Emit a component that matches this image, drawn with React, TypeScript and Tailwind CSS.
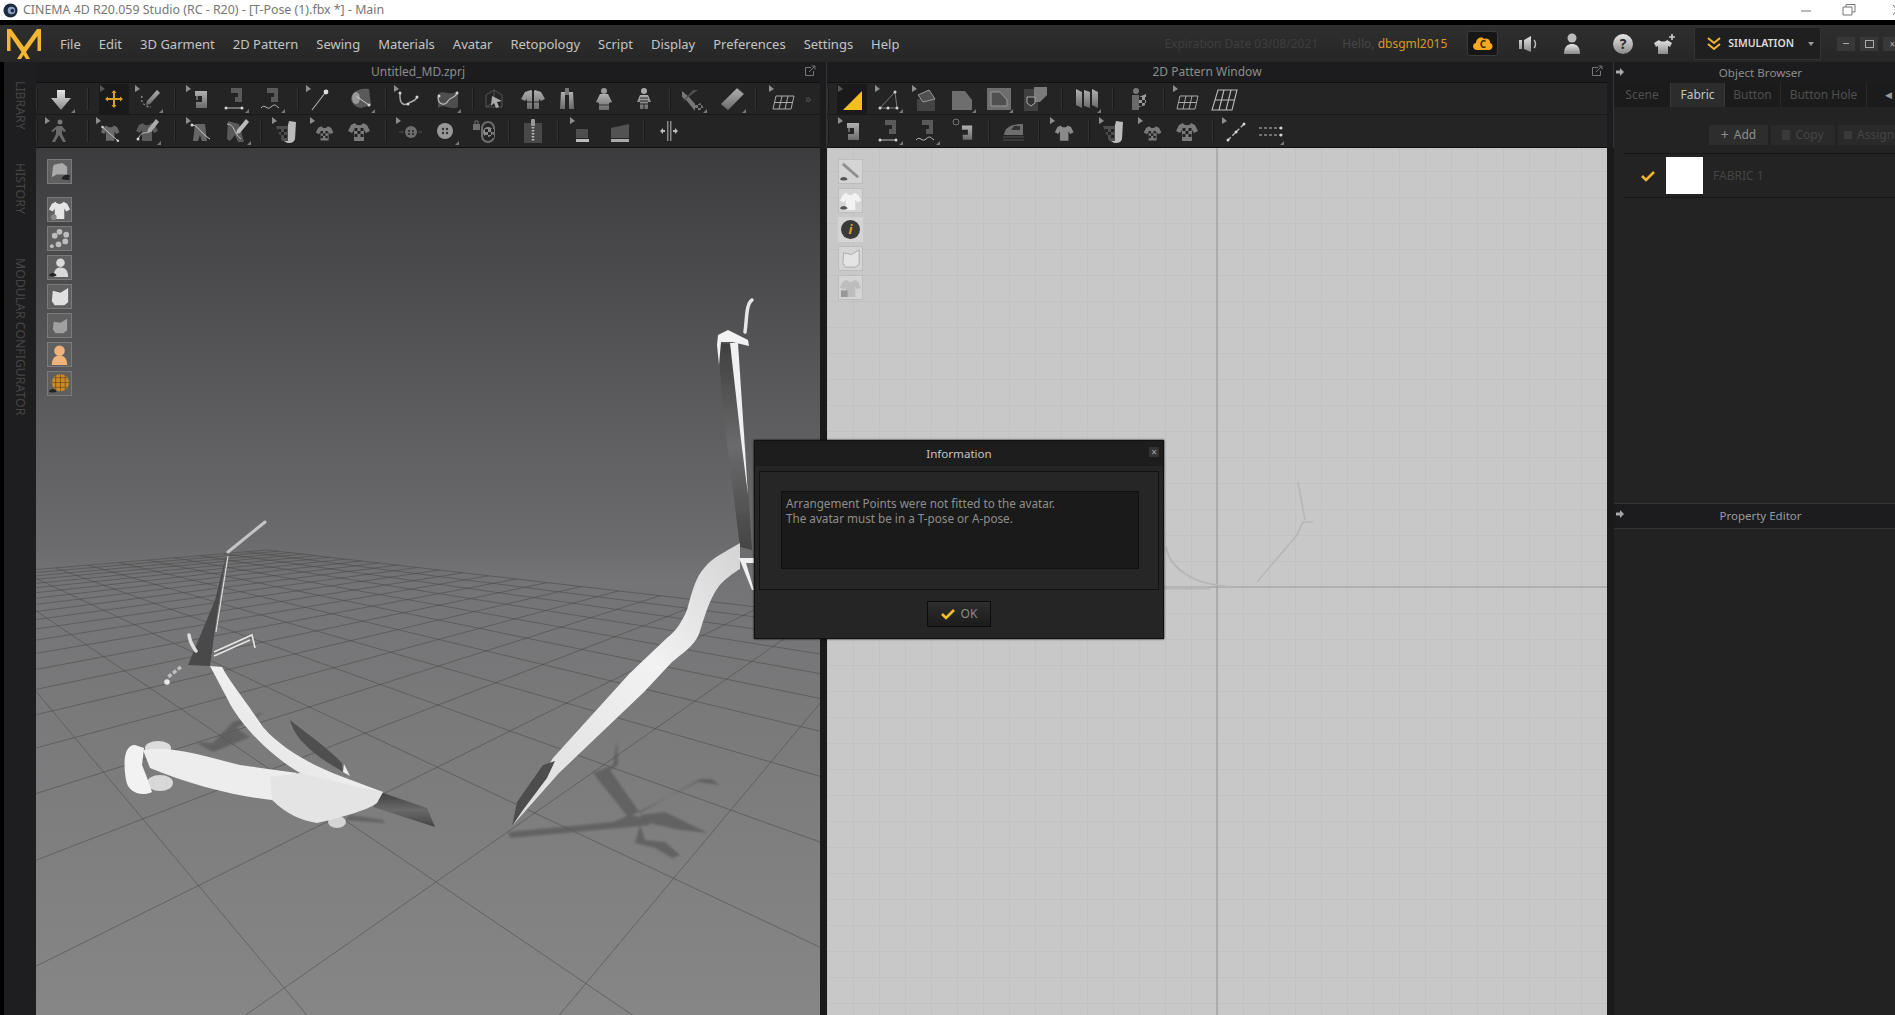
import React from 'react';

// floor grid of the 3D viewport, projected from two vanishing points
const a = 0.028;
const pt = (u: number, v: number) => {
  const s = 1 - u * a - v * a;
  return [(267 + 120 * u * a - 1000 * v * a) / s, (550 - 505 * u * a - 488 * v * a) / s];
};
const floorPath = () => {
  let d = '';
  const N = 40;
  for (let i = 0; i <= N; i++) {
    const lim = 0.97 / a - i;
    if (lim <= 0) continue;
    const e = Math.min(N, lim);
    const p = pt(i, 0), q = pt(i, e), r = pt(0, i), t = pt(e, i);
    d += `M${p[0].toFixed(1)} ${p[1].toFixed(1)}L${q[0].toFixed(1)} ${q[1].toFixed(1)}`;
    d += `M${r[0].toFixed(1)} ${r[1].toFixed(1)}L${t[0].toFixed(1)} ${t[1].toFixed(1)}`;
  }
  return d;
};

const SHIRT = 'M8 4 L4 6 L1 12 L5 14 L7 11 L7 22 L17 22 L17 11 L19 14 L23 12 L20 6 L16 4 C15 7 9 7 8 4z';
const MACHINE = 'M7 4 H19 V21 H8 V15 H14 V9 H7z';

const Checker = ({ x, y }: { x: number; y: number }) => (
  <g fill="#222">
    <rect x={x} y={y} width="3" height="3" />
    <rect x={x + 6} y={y} width="3" height="3" />
    <rect x={x + 3} y={y + 3} width="3" height="3" />
    <rect x={x} y={y + 6} width="3" height="3" />
    <rect x={x + 6} y={y + 6} width="3" height="3" />
  </g>
);

const Dot = ({ x, y }: { x: number; y: number }) => <circle cx={x} cy={y} r="1.5" fill="#d4d4d4" />;

const Glyph = ({ name }: { name: string }) => {
  switch (name) {
    case 'down':
      return <path d="M8 3 H16 V11 H22 L12 23 L2 11 H8z" fill="url(#lg)" />;
    case 'move':
      return <path d="M11 6 H13 V11 H18 V13 H13 V18 H11 V13 H6 V11 H11z M12 3 L14.5 6 H9.5z M12 21 L14.5 18 H9.5z M3 12 L6 9.5 V14.5z M21 12 L18 9.5 V14.5z" fill="#d99f2a" />;
    case 'editpen':
      return <g><path d="M5 9 C3 15 8 20 14 20" fill="none" stroke="#888" strokeDasharray="2 2" strokeWidth="1.5" /><path d="M20 3 L23 6 L13 17 L9 18 L10 14z" fill="url(#lg2)" /></g>;
    case 'sew':
      return <g><path d={MACHINE} fill="url(#lg2)" /><path d="M9 9 V13" stroke="#aaa" /></g>;
    case 'sewseg':
      return <g><path d="M8 1 H19 V15 H12 V10 H15 V6 H8z" fill="#5a5a5a" /><path d="M2 21 H20" stroke="#bbb" /><Dot x={3} y={21} /><Dot x={19} y={21} /></g>;
    case 'sewfree':
      return <g><path d="M8 1 H19 V15 H12 V10 H15 V6 H8z" fill="#5a5a5a" /><path d="M2 21 C6 16 8 24 12 20 S17 19 20 21" stroke="#bbb" fill="none" /></g>;
    case 'pin':
      return <g><path d="M4 23 L17 6" stroke="#aaa" strokeWidth="1.2" /><circle cx="18" cy="5" r="2.4" fill="#ddd" /></g>;
    case 'tack':
      return <g><path d="M2 11 C4 3 13 1 20 2 L22 18 L12 21 C6 20 2 16 2 11z" fill="#5a5a5a" /><ellipse cx="7" cy="11" rx="4" ry="6" fill="#999" /><path d="M7 9 L20 18" stroke="#ccc" /><Dot x={20} y={18} /></g>;
    case 'curve':
      return <g><path d="M4 6 C3 20 10 18 13 16 S20 14 21 10" stroke="#aaa" strokeWidth="1.5" fill="none" /><Dot x={4} y={6} /><Dot x={21} y={10} /><Dot x={12} y={17} /></g>;
    case 'patchcurve':
      return <g><path d="M3 7 C9 2 15 10 23 4 L23 20 C15 24 9 16 3 21z" fill="#4e4e4e" /><path d="M3 10 C3 18 10 19 13 14 S20 12 22 6" stroke="#bbb" strokeWidth="1.2" fill="none" /><Dot x={4} y={9} /><Dot x={22} y={6} /></g>;
    case 'box3d':
      return <g><path d="M4 8 L12 3 V15 L4 20z M12 3 L20 8 V20 H4" fill="none" stroke="#555" /><path d="M10 9 L20 14 L15 15 L17 20 L14 21 L12 16 L9 19z" fill="#aaa" /></g>;
    case 'split':
      return <g><path d="M10 3 L4 5 L0 12 L4 14 L6 12 V22 H11 V4z M14 3 L20 5 L24 12 L20 14 L18 12 V22 H13 V4z" fill="url(#lg2)" /><path d="M0 15 H24" stroke="#242424" /></g>;
    case 'vest':
      return <g><path d="M6 5 H18 L19 22 H14 V8 H10 V22 H5z" fill="url(#lg2)" /><path d="M10 1 H14 V8 H10z" fill="#777" /></g>;
    case 'dress':
      return <g><circle cx="12" cy="4" r="3" fill="#999" /><path d="M8 7 H16 L20 15 L17 16 V23 H7 V16 L4 15z" fill="url(#lg2)" /><path d="M7 18 H17" stroke="#333" /></g>;
    case 'figure':
      return <g><circle cx="12" cy="4" r="3" fill="#aaa" /><path d="M8 8 H16 L19 15 L16 15 V22 H8 V15 H5z" fill="url(#lg2)" /><path d="M8 11 H16 M8 14 H16 M8 17 H16 M12 17 V22" stroke="#242424" /></g>;
    case 'bundle':
      return <g><path d="M1 4 L8 10 L15 18 L20 16 L23 22 L14 24 L6 14 L1 10z" fill="#777" /><path d="M1 15 L12 3 L17 3 L9 9z" fill="#4e4e4e" /><Checker x={14} y={15} /></g>;
    case 'tape':
      return <path d="M17 1 L24 7 L8 23 L1 17z" fill="url(#lg2)" stroke="#555" />;
    case 'grid':
      return <g fill="none" stroke="#aaa" strokeWidth="1"><path d="M5 9 H23 L20 22 H2z M11 9 L8 22 M17 9 L14 22 M3.5 15.5 H21.5" /></g>;
    case 'grid2':
      return <g fill="none" stroke="#bbb" strokeWidth="1.1"><path d="M6 3 H25 L20 23 H0z M12 3 L7 23 M19 3 L14 23 M3 13 H22" /></g>;
    case 'walk':
      return <g><circle cx="13" cy="3" r="2.5" fill="#777" /><path d="M10 7 H15 L19 12 L17 13 L15 11 V15 L19 23 H16 L12 16 L8 23 H5 L9 15 V10 L6 13 L4 12z" fill="#6a6a6a" /></g>;
    case 'shirtpts':
      return <g transform="translate(2 3) scale(.85)"><path d={SHIRT} fill="#6a6a6a" /><Dot x={3} y={6} /><Dot x={21} y={22} /><path d="M3 6 L21 22" stroke="#ccc" /></g>;
    case 'shirtpen':
      return <g><path d={SHIRT} fill="#5a5a5a" /><path d="M3 20 C8 8 14 20 18 6" stroke="#bbb" fill="none" /><Dot x={3} y={20} /><path d="M21 0 L24 3 L16 13 L12 14 L13 10z" fill="#aaa" /></g>;
    case 'body':
      return <g><path d="M7 5 L17 5 L19 22 L14 22 L12 16 L10 22 L5 22z" fill="#666" /><path d="M4 6 C10 6 12 14 22 20" stroke="#ccc" fill="none" /><Dot x={4} y={6} /></g>;
    case 'bodypen':
      return <g><path d="M3 2 L14 5 L19 23 L13 23 L10 16 L5 22 L2 20z" fill="#5a5a5a" /><path d="M2 5 C10 5 8 14 16 20" stroke="#bbb" fill="none" /><path d="M21 0 L24 3 L15 14 L11 15 L12 11z" fill="#bbb" /></g>;
    case 'texture':
      return <g><path d="M15 2 L22 3 L21 20 C20 25 13 25 10 22z" fill="#bbb" /><path d="M2 7 L14 7 L14 22 L8 22z" fill="#4e4e4e" /><Checker x={4} y={10} /></g>;
    case 'shirtcheck':
      return <g transform="translate(3 4) scale(.8)"><path d={SHIRT} fill="#7a7a7a" /><Checker x={7} y={10} /></g>;
    case 'shirtcheck2':
      return <g><path d={SHIRT} fill="#7a7a7a" /><Checker x={7.5} y={9} /></g>;
    case 'btnadd':
      return <g><circle cx="13" cy="13" r="6" fill="#6e6e6e" /><circle cx="11" cy="12" r="1" fill="#222" /><circle cx="15" cy="12" r="1" fill="#222" /><circle cx="11" cy="15" r="1" fill="#222" /><circle cx="15" cy="15" r="1" fill="#222" /><path d="M1 13 H6 M20 13 H24" stroke="#4e4e4e" /></g>;
    case 'btn':
      return <g><circle cx="12" cy="12" r="8" fill="#989898" /><circle cx="10" cy="10" r="1.2" fill="#333" /><circle cx="14" cy="10" r="1.2" fill="#333" /><circle cx="10" cy="14" r="1.2" fill="#333" /><circle cx="14" cy="14" r="1.2" fill="#333" /></g>;
    case 'btnhole':
      return <g><rect x="10" y="3" width="12" height="20" rx="6" fill="none" stroke="#6e6e6e" strokeWidth="2" /><circle cx="16" cy="13" r="5" fill="#8a8a8a" /><Checker x={13} y={10} /><path d="M1 5 H8 V11 H1z" fill="#6e6e6e" /><path d="M3 5 V2 H6 V5" fill="none" stroke="#6e6e6e" /></g>;
    case 'zipper':
      return <g><rect x="3" y="4" width="18" height="20" fill="#484848" /><path d="M12 5 V23" stroke="#bbb" strokeWidth="2.5" strokeDasharray="1.5 1.5" /><rect x="10" y="0" width="4" height="7" rx="1" fill="#999" /></g>;
    case 'elastic':
      return <g><path d="M4 10 H16 V19 H4z" fill="#4e4e4e" /><path d="M4 20 H17 V23 H4z" fill="#bbb" /></g>;
    case 'elastic2':
      return <g><path d="M3 9 L21 5 V19 H3z" fill="#525252" /><path d="M3 20 H21 V23 H3z" fill="#aaa" /></g>;
    case 'measure':
      return <g><path d="M4 12 H8 M16 12 H20" stroke="#bbb" strokeWidth="2" /><path d="M3 12 L6 9 V15z M21 12 L18 9 V15z" fill="#bbb" /><rect x="10" y="2" width="1.5" height="20" fill="#888" /><rect x="13" y="2" width="1.5" height="20" fill="#888" /></g>;
    case 'tri':
      return <path d="M3 23 L22 4 V23z" fill="#f2bf1e" />;
    case 'triedit':
      return <g><path d="M3 21 L18 5 L20 21z" fill="none" stroke="#777" /><Dot x={3} y={21} /><Dot x={18} y={5} /><Dot x={20} y={21} /><Dot x={11} y={21} /></g>;
    case 'house':
      return <g><path d="M3 12 H21 V24 H3z" fill="#444" /><path d="M4 8 L15 3 L21 12 L9 15z" fill="#505050" stroke="#999" /></g>;
    case 'poly':
      return <path d="M2 4 H15 L22 13 V23 H2z" fill="#6e6e6e" />;
    case 'polybox':
      return <g><rect x="0" y="1" width="24" height="22" fill="#6e6e6e" /><path d="M4 5 H13 L20 13 V19 H4z" fill="#505050" stroke="#999" /></g>;
    case 'shield':
      return <g><rect x="0" y="2" width="14" height="22" fill="#404040" /><path d="M10 0 H23 V8 L16 15 H10z" fill="#7a7a7a" /><path d="M3 10 H11 V16 L7 19 L3 16z" fill="#333" stroke="#aaa" /></g>;
    case 'panels':
      return <path d="M1 2 L7 5 V21 L1 18z M9 3 L15 5 V21 L9 19z M17 2 L23 5 V21 L17 18z" fill="url(#lg2)" />;
    case 'persons':
      return <g><circle cx="10" cy="4" r="3" fill="#777" /><path d="M6 8 H13 V23 H6z" fill="#6a6a6a" /><path d="M13 10 L20 7 V18 L13 20z" fill="#999" /><Checker x={13} y={10} /></g>;
    case 'search':
      return <g><circle cx="4" cy="3" r="3" fill="none" stroke="#777" /><path d={MACHINE} fill="url(#lg2)" transform="translate(4 3) scale(.85)" /></g>;
    case 'iron':
      return <g><path d="M3 16 C4 8 10 5 22 5 V16z" fill="#6e6e6e" /><path d="M13 7 H19 V11 H10z" fill="#333" /><path d="M2 18 H23 M2 21 H23" stroke="#505050" /></g>;
    case 'tee':
      return <g transform="translate(2 3) scale(.85)"><path d={SHIRT} fill="#8a8a8a" /></g>;
    case 'line':
      return <g><path d="M4 21 L20 5" stroke="#bbb" strokeWidth="1.3" strokeDasharray="4 2" /><Dot x={4} y={21} /><Dot x={20} y={5} /><Dot x={12} y={13} /></g>;
    case 'dashes':
      return <g><path d="M1 9 H23 M1 16 H23" stroke="#8a8a8a" strokeDasharray="3 2" strokeWidth="1.5" /><Dot x={23} y={9} /><Dot x={23} y={16} /></g>;
    default:
      return null;
  }
};

type Item = [string, string, string?];

const Tool = ({ item }: { item: Item }) => {
  const [name, cls, flags = ''] = item;
  if (name === 'sep') return <div className={`w-[2px] h-[22px] shrink-0 bg-[#343434] border-r border-[#181818] ${cls}`} />;
  const active = flags.includes('x');
  return (
    <div className={`w-[30px] h-[30px] shrink-0 ${active ? 'bg-[#1a1a1a] rounded-[1px]' : ''} ${cls}`}>
      <svg width="30" height="30" viewBox="-3 -3 30 30">
        <Glyph name={name} />
        {flags.includes('a') && <path d="M-2 -2 L3 2 L-2 5z" fill={active ? '#555' : '#8e8e8e'} />}
        {flags.includes('c') && <path d="M26 26 V22 L22 26z" fill="#777" />}
      </svg>
    </div>
  );
};

const row3dA: Item[] = [
  ['sep', 'ml-0'], ['down', 'ml-[8px]', 'c'], ['sep', 'ml-[11px]'], ['move', 'ml-[10px]', 'ax'], ['editpen', 'ml-[5px]', 'ac'],
  ['sep', 'ml-[10px]'], ['sew', 'ml-[9px]', 'a'], ['sewseg', 'ml-[5px]', 'c'], ['sewfree', 'ml-[6px]', 'c'], ['sep', 'ml-[11px]'],
  ['pin', 'ml-[6px]', 'a'], ['tack', 'ml-[11px]', 'c'], ['sep', 'ml-[9px]'], ['curve', 'ml-[6px]', 'a'], ['patchcurve', 'ml-[9px]', 'c'],
  ['sep', 'ml-[10px]'], ['box3d', 'ml-[5px]'], ['split', 'ml-[9px]'], ['vest', 'ml-[4px]'], ['dress', 'ml-[7px]'], ['figure', 'ml-[10px]'],
  ['sep', 'ml-[10px]'], ['bundle', 'ml-[7px]', 'c'], ['tape', 'ml-[9px]', 'c'], ['sep', 'ml-[8px]'], ['grid', 'ml-[11px]', 'a'],
];

const row3dB: Item[] = [
  ['sep', 'ml-0'], ['walk', 'ml-[6px]', 'a'], ['sep', 'ml-[13px]'], ['shirtpts', 'ml-[6px]', 'a'], ['shirtpen', 'ml-[7px]', 'c'],
  ['sep', 'ml-[12px]'], ['body', 'ml-[9px]', 'a'], ['bodypen', 'ml-[7px]', 'c'], ['sep', 'ml-[8px]'], ['texture', 'ml-[9px]', 'a'],
  ['shirtcheck', 'ml-[8px]', 'a'], ['shirtcheck2', 'ml-[5px]'], ['sep', 'ml-[11px]'], ['btnadd', 'ml-[8px]', 'a'], ['btn', 'ml-[5px]', 'c'],
  ['btnhole', 'ml-[9px]'], ['sep', 'ml-[9px]'], ['zipper', 'ml-[8px]'], ['sep', 'ml-[9px]'], ['elastic', 'ml-[10px]', 'a'], ['elastic2', 'ml-[6px]'],
  ['sep', 'ml-[8px]'], ['measure', 'ml-[9px]'],
];

const row2dA: Item[] = [
  ['sep', 'ml-0'], ['tri', 'ml-[8px]', 'ax'], ['triedit', 'ml-[7px]', 'ac'], ['house', 'ml-[7px]', 'a'], ['poly', 'ml-[6px]', 'c'],
  ['polybox', 'ml-[7px]', 'c'], ['shield', 'ml-[7px]'], ['sep', 'ml-[10px]'], ['panels', 'ml-[9px]', 'c'], ['sep', 'ml-[10px]'],
  ['persons', 'ml-[9px]'], ['sep', 'ml-[10px]'], ['grid', 'ml-[7px]', 'a'], ['grid2', 'ml-[7px]'],
];

const row2dB: Item[] = [
  ['sep', 'ml-0'], ['sew', 'ml-[8px]', 'a'], ['sewseg', 'ml-[7px]', 'c'], ['sewfree', 'ml-[7px]', 'c'], ['search', 'ml-[8px]'],
  ['sep', 'ml-[9px]'], ['iron', 'ml-[8px]'], ['sep', 'ml-[10px]'], ['tee', 'ml-[9px]', 'a'], ['sep', 'ml-[9px]'], ['texture', 'ml-[8px]', 'a'],
  ['shirtcheck', 'ml-[9px]', 'a'], ['shirtcheck2', 'ml-[5px]'], ['sep', 'ml-[10px]'], ['line', 'ml-[7px]', 'a'], ['dashes', 'ml-[4px]', 'c'],
];

const Popout = () => (
  <svg width="12" height="12" viewBox="0 0 12 12" fill="none" stroke="#777" className="absolute right-[4px] top-[3px]">
    <path d="M7 2.5 H1.5 V10.5 H9.5 V6" />
    <path d="M5 7 L10.5 1.5 M7.5 1 H11 V4.5" />
  </svg>
);

const PanelArrow = () => (
  <svg width="10" height="10" viewBox="0 0 10 10" className="absolute left-[1px] top-[5px]">
    <path d="M1 3.5 H5 V1 L9 5 L5 9 V6.5 H1z" fill="#a8a8a8" />
  </svg>
);

const ViewIcon = ({ children, light }: { children: React.ReactNode; light?: boolean }) => (
  <div className={`w-[25px] h-[25px] border ${light ? 'bg-[#d4d4d4] border-[#bdbdbd]' : 'bg-[#5f5f60] border-[#7a7a7a]'}`}>
    <svg width="23" height="23" viewBox="0 0 24 24">{children}</svg>
  </div>
);

const Eye = () => <path d="M1 20 C3 17 7 17 9 20 C7 22 3 22 1 20z" fill="#555" />;

const Scene3D = () => (
  <svg width="784" height="867" viewBox="36 148 784 867" className="absolute inset-0">
    <defs>
      <linearGradient id="dk" x1="0" y1="0" x2="0" y2="1">
        <stop offset="0" stopColor="#3f3f3f" />
        <stop offset="0.5" stopColor="#6a6a6a" />
        <stop offset="1" stopColor="#444" />
      </linearGradient>
      <linearGradient id="wh" x1="1" y1="0" x2="0" y2="1">
        <stop offset="0" stopColor="#d4d4d4" />
        <stop offset="0.4" stopColor="#f2f2f2" />
        <stop offset="1" stopColor="#dcdcdc" />
      </linearGradient>
      <filter id="soft"><feGaussianBlur stdDeviation="0.6" /></filter>
      <filter id="softer"><feGaussianBlur stdDeviation="1.2" /></filter>
    </defs>
    <path d={floorPath()} stroke="#484848" strokeOpacity="0.55" strokeWidth="1" fill="none" />

    {/* shadows */}
    <g fill="#5a5a5a" fillOpacity="0.75" filter="url(#softer)">
      <path d="M265 712 L233 722 L213 743 L195 742 L213 752 L250 737 L236 728z" />
      <path d="M350 815 L383 820 L385 823 L345 820z" />
      <path d="M617 741 L613 765 L593 773 L628 817 L698 782 L720 785 L712 779 L700 779 L640 813 L610 770 L618 765z" />
      <path d="M508 832 L613 822 L630 815 L645 818 L650 825 L630 827 L510 838z" />
      <path d="M640 815 L665 812 L708 833 L680 830 L645 822z" />
      <path d="M640 825 L645 840 L665 842 L680 855 L672 858 L655 848 L635 843z" />
    </g>

    {/* left figure */}
    <g filter="url(#soft)">
      <path d="M265 522 L228 552" stroke="#c4c4c4" strokeWidth="3" strokeLinecap="round" />
      <path d="M226 556 L215 600 L188 665 L210 666 L216 622z" fill="#4a4a4a" />
      <path d="M228 556 L216 632" stroke="#dcdcdc" strokeWidth="1.2" fill="none" />
      <path d="M189 635 C190 642 193 647 196 651" stroke="#ddd" strokeWidth="3.5" fill="none" strokeLinecap="round" />
      <path d="M214 652 L252 635 L255 648 M214 656 L250 640" stroke="#e4e4e4" strokeWidth="1.6" fill="none" />
      <path d="M181 667 L168 677" stroke="#bdbdbd" strokeWidth="3.5" strokeDasharray="4 2" />
      <circle cx="167" cy="682" r="2.8" fill="#e8e8e8" />
      <path d="M210 666 L222 667 C230 682 243 697 263 727 C280 747 310 765 343 777 L383 792 L347 793 C320 785 295 772 277 757 C255 740 235 715 228 700z" fill="url(#wh)" />
      <path d="M290 720 C294 735 305 750 343 772 L342 763 C328 748 305 732 290 720z" fill="#505050" />
      <path d="M343 772 L350 776 L344 764z" fill="#ececec" />
      <path d="M383 793 L427 808 L435 827 L407 818 L373 807z" fill="url(#dk)" />
      <ellipse cx="337" cy="822" rx="9" ry="6" fill="#d4d4d4" />
      <ellipse cx="160" cy="783" rx="13" ry="8" fill="#d8d8d8" />
      <ellipse cx="158" cy="748" rx="13" ry="7" fill="#dcdcdc" />
      <path d="M143 750 C170 745 200 755 240 765 L297 773 L272 800 C240 797 190 785 150 768z" fill="#ededed" />
      <path d="M135 745 C124 745 123 762 126 780 C128 793 142 797 152 792 L146 775 L142 765 L144 748z" fill="#f2f2f2" />
      <path d="M270 777 L300 773 L340 783 L383 792 L377 803 C368 810 340 818 317 823 C300 820 288 815 272 800z" fill="#e4e4e4" />
    </g>

    {/* right figure */}
    <g filter="url(#soft)">
      <path d="M752 300 C746 304 747 318 745 332" stroke="#e6e6e6" strokeWidth="3.5" fill="none" strokeLinecap="round" />
      <path d="M718 343 L738 345 L747 465 L752 550 L740 547 L723 410z" fill="url(#dk)" />
      <path d="M730 343 L738 343 L748 495 L741 440z" fill="#f0f0f0" />
      <path d="M718 335 L728 330 L748 340 L749 346 L732 342 L721 342 L719 365 L717 345z" fill="#f2f2f2" />
      <path d="M740 543 C725 552 712 558 705 567 C695 578 692 592 687 610 C682 622 675 632 668 637 L630 673 L553 758 L512 826 L559 773 L644 692 L672 662 C684 652 694 646 699 634 C704 619 709 599 719 586 C726 578 732 574 740 569z" fill="url(#wh)" />
      <path d="M555 761 L547 778 L523 810 L512 826 L517 802 L543 765z" fill="#4d4d4d" />
      <path d="M739 558 L754 558 L754 563 L746 563 L754 590 L752 590z" fill="#f0f0f0" />
    </g>
  </svg>
);

const Pattern2D = () => (
  <svg width="780" height="867" viewBox="827 148 780 867" className="absolute inset-0">
    <defs>
      <pattern id="cell" x="827" y="145" width="26" height="26" patternUnits="userSpaceOnUse">
        <path d="M0 0 H26 M0 0 V26" stroke="#bcbcbc" strokeWidth="1" fill="none" />
      </pattern>
    </defs>
    <rect x="827" y="148" width="780" height="867" fill="url(#cell)" />
    <path d="M1217 148 V1015 M827 587 H1607" stroke="#9c9c9c" strokeWidth="1.2" />
    <g stroke="#b6b6b6" fill="none" strokeWidth="2">
      <path d="M1166 547 C1168 560 1178 570 1187 575 C1195 580 1210 585 1230 587" />
      <path d="M1164 588 H1210" strokeWidth="3" />
      <path d="M1257 582 L1297 535 L1303 522 L1313 522 M1298 482 L1305 520" strokeWidth="1.6" />
    </g>
  </svg>
);

const menus = ['File', 'Edit', '3D Garment', '2D Pattern', 'Sewing', 'Materials', 'Avatar', 'Retopology', 'Script', 'Display', 'Preferences', 'Settings', 'Help'];

export default function App() {
  return (
    <div className="w-[1895px] h-[1015px] overflow-hidden flex flex-col relative bg-[#1c1c1c] text-[#c8c8c8] font-['Noto_Sans',sans-serif]">
      <svg width="0" height="0" className="absolute">
        <defs>
          <linearGradient id="lg" x1="0" y1="0" x2="0" y2="1">
            <stop offset="0" stopColor="#e6e6e6" />
            <stop offset="1" stopColor="#8a8a8a" />
          </linearGradient>
          <linearGradient id="lg2" x1="0" y1="0" x2="0" y2="1">
            <stop offset="0" stopColor="#b0b0b0" />
            <stop offset="1" stopColor="#6a6a6a" />
          </linearGradient>
        </defs>
      </svg>

      {/* Window title */}
      <div className="h-5 shrink-0 bg-white flex items-center text-[12.4px] text-[#777] pl-[3px]">
        <svg width="15" height="15" viewBox="0 0 16 16" className="mr-[5px]">
          <circle cx="8" cy="8" r="7.5" fill="#1d2b3f" />
          <circle cx="9" cy="8" r="4" fill="#8ea6c4" />
          <circle cx="10" cy="8" r="2" fill="#22304a" />
        </svg>
        <span>CINEMA 4D R20.059 Studio (RC - R20) - [T-Pose (1).fbx *] - Main</span>
        <div className="ml-auto flex items-center">
          <svg width="100" height="14" viewBox="0 0 100 14" fill="none" stroke="#777" className="mr-[-6px]">
            <path d="M0 8 H10" />
            <path d="M42 4 H51 V12 H42z M45 4 V1.5 H54 V9 H51" />
            <path d="M92 2 L100 12 M100 2 L92 12" />
          </svg>
        </div>
      </div>
      <div className="h-[5px] shrink-0 bg-black" />

      {/* Menu bar */}
      <div className="h-[37px] shrink-0 bg-[linear-gradient(180deg,#2f2f2f,#262626)] flex items-center relative whitespace-nowrap">
        <svg width="36" height="34" viewBox="0 0 36 34" className="ml-[6px] shrink-0">
          <path d="M1 2 H5 L18 20 L31 2 H35 V24 H31.5 V9 L20 25 L24 32 H20 L17.5 28 L15 32 H11 L15.5 25 L4.5 9 V24 H1z" fill="#f2b632" />
        </svg>
        <div className="flex items-center gap-[18px] ml-[18px] pt-[2px] text-[13px] text-[#c4c4c4] shrink-0">
          {menus.map((m) => (
            <span key={m}>{m}</span>
          ))}
        </div>

        <span className="ml-[265px] text-[12px] text-[#3e3e3e] shrink-0">Expiration Date 03/08/2021</span>
        <span className="ml-[24px] text-[12px] text-[#464646] shrink-0">Hello, <span className="text-[#d59a2b]">dbsgml2015</span></span>

        <div className="ml-[20px] w-[31px] h-[25px] bg-[#161616] rounded-[3px] border border-[#3a3a3a] flex items-center justify-center shrink-0">
          <svg width="22" height="18" viewBox="0 0 22 18">
            <path d="M5 15 C0 15 0 8 4 8 C4 3 10 1 12 4 C16 2 19 6 18 8 C22 9 21 15 17 15z" fill="#f5a81e" />
            <text x="11" y="13" fontSize="10" fontWeight="700" textAnchor="middle" fill="#3a2a00" fontFamily="Noto Sans">C</text>
          </svg>
        </div>
        <svg width="24" height="20" viewBox="0 0 24 20" className="ml-[19px] shrink-0">
          <path d="M2 6 H5 V15 H2z M7 6 L14 2 V18 L7 15z" fill="url(#lg)" />
          <path d="M17 6 C19 8 19 12 17 14" stroke="#bbb" strokeWidth="1.5" fill="none" />
        </svg>
        <svg width="20" height="24" viewBox="0 0 20 24" className="ml-[21px] shrink-0">
          <circle cx="10" cy="6" r="4.5" fill="#bbb" />
          <path d="M2 22 C2 14 6 12 10 12 C14 12 18 14 18 22z" fill="url(#lg)" />
        </svg>
        <svg width="22" height="22" viewBox="0 0 22 22" className="ml-[30px] shrink-0">
          <circle cx="11" cy="11" r="10" fill="url(#lg)" />
          <text x="11" y="16" fontSize="14" fontWeight="700" textAnchor="middle" fill="#2c2c2c" fontFamily="Noto Sans">?</text>
        </svg>
        <svg width="24" height="22" viewBox="0 0 24 22" className="ml-[19px] shrink-0">
          <path d="M6 7 L1 10 L3 14 L5 13 V21 H15 V13 L17 14 L19 10 L14 7 C13 9 7 9 6 7z" fill="url(#lg)" />
          <path d="M19 1 V7 M16 4 H22" stroke="#ccc" strokeWidth="1.6" />
        </svg>
        <div className="ml-[17px] w-[127px] h-[33px] bg-[#1f1f1f] border border-[#333] flex items-center shrink-0">
          <svg width="14" height="16" viewBox="0 0 14 16" className="ml-[12px]" fill="none" stroke="#f2b632" strokeWidth="2">
            <path d="M1 2 L7 7 L13 2 M1 8 L7 13 L13 8" />
          </svg>
          <span className="ml-[7px] text-[10.5px] font-semibold text-[#dcdcdc]">SIMULATION</span>
          <span className="ml-[14px] w-0 h-0 border-l-[3px] border-r-[3px] border-t-[4px] border-l-transparent border-r-transparent border-t-[#999]" />
        </div>
        <div className="ml-[16px] flex gap-[5px] shrink-0">
          <div className="w-[18px] h-[14px] bg-[#383838] flex items-center justify-center"><div className="w-[6px] h-px bg-[#aaa]" /></div>
          <div className="w-[18px] h-[14px] bg-[#383838] flex items-center justify-center"><div className="w-[9px] h-[8px] border border-[#aaa]" /></div>
          <div className="w-[18px] h-[14px] bg-[#383838] flex items-center justify-center text-[10px] leading-none text-[#aaa]">×</div>
        </div>
      </div>

      {/* Workspace */}
      <div className="flex-1 flex min-h-0 bg-[#1a1a1a]">
        {/* Side labels */}
        <div className="w-9 shrink-0 border-l-4 border-black bg-[#1e1e20] flex flex-col items-center pt-5 text-[12.3px] text-[#454547]">
          <div className="h-[46px] flex items-center justify-center [writing-mode:vertical-rl]">LIBRARY</div>
          <div className="h-[51px] mt-[35px] flex items-center justify-center [writing-mode:vertical-rl]">HISTORY</div>
          <div className="h-[157px] mt-[44px] flex items-center justify-center whitespace-nowrap [writing-mode:vertical-rl]">MODULAR CONFIGURATOR</div>
        </div>

        {/* 3D window */}
        <div className="w-[784px] shrink-0 flex flex-col">
          <div className="h-[21px] shrink-0 relative bg-[#1c1c1e] flex items-center justify-center pr-5 text-[12px] text-[#8c8c8c] border-b border-[#101010]">
            Untitled_MD.zprj
            <Popout />
          </div>
          <div className="h-[32px] shrink-0 bg-[#242424] flex items-center border-b border-[#181818]">
            {row3dA.map((it, i) => <Tool key={i} item={it} />)}
            <span className="ml-[7px] text-[12px] text-[#555]">»</span>
          </div>
          <div className="h-[33px] shrink-0 bg-[#242424] flex items-center border-b border-[#101010]">
            {row3dB.map((it, i) => <Tool key={i} item={it} />)}
          </div>
          <div className="flex-1 relative bg-[linear-gradient(180deg,#3c3c3e_0%,#6c6c6e_46%,#747476_50%,#868686_100%)]">
            <Scene3D />
            <div className="absolute left-[11px] top-[11px] flex flex-col gap-1">
              <div className="mb-[9px]">
                <ViewIcon><path d="M6 5 L15 3 L20 7 V15 H9 L4 18 L5 8z" fill="#aaa" /><path d="M14 20 C16 15 20 15 23 16 L22 21z" fill="#222" /></ViewIcon>
              </div>
              <ViewIcon><path d={SHIRT} fill="#e4e4e4" /><circle cx="6" cy="20" r="3" fill="#888" /></ViewIcon>
              <ViewIcon>
                <g fill="#bdbdbd"><circle cx="12" cy="5" r="3" /><circle cx="19" cy="8" r="3" /><circle cx="7" cy="9" r="3" /><circle cx="18" cy="15" r="3" /><circle cx="11" cy="18" r="3" /><circle cx="4" cy="20" r="2" /></g>
              </ViewIcon>
              <ViewIcon><circle cx="13" cy="7" r="4.5" fill="#d8d8d8" /><path d="M6 22 C6 14 9 12 13 12 C18 12 21 15 21 22z" fill="#d8d8d8" /><path d="M1 20 C3 17 7 17 9 20 C7 22 3 22 1 20z" fill="#222" /></ViewIcon>
              <ViewIcon><path d="M5 6 L13 8 L21 3 V18 L17 21 H7 L4 17z" fill="#e0e0e0" /></ViewIcon>
              <ViewIcon><path d="M6 8 L13 9 L20 5 V17 L16 20 H8 L5 16z" fill="#a0a0a0" /></ViewIcon>
              <ViewIcon><circle cx="12" cy="8" r="5.5" fill="#f0b27a" /><path d="M4 23 C4 15 8 13 12 13 C16 13 20 15 20 23z" fill="#f0b27a" /></ViewIcon>
              <ViewIcon>
                <circle cx="13" cy="11" r="9" fill="#c98a2a" />
                <path d="M4 11 H22 M13 2 V20 M6 6 H20 M6 16 H20 M8 3 V19 M18 3 V19" stroke="#6a4710" strokeWidth=".7" />
                <path d="M1 20 C3 17 7 17 9 20 C7 22 3 22 1 20z" fill="#222" />
              </ViewIcon>
            </div>
          </div>
        </div>

        <div className="w-[7px] shrink-0 flex flex-col">
          <div className="h-[86px] bg-[#1c1c1e] border-r border-[#333]" />
          <div className="flex-1 bg-[#1a1a1a]" />
        </div>

        {/* 2D window */}
        <div className="w-[780px] shrink-0 flex flex-col">
          <div className="h-[21px] shrink-0 relative bg-[#1c1c1e] flex items-center justify-center pr-5 text-[12px] text-[#8c8c8c] border-b border-[#101010]">
            2D Pattern Window
            <Popout />
          </div>
          <div className="h-[32px] shrink-0 bg-[#242424] flex items-center border-b border-[#181818]">
            {row2dA.map((it, i) => <Tool key={i} item={it} />)}
          </div>
          <div className="h-[33px] shrink-0 bg-[#242424] flex items-center border-b border-[#101010]">
            {row2dB.map((it, i) => <Tool key={i} item={it} />)}
          </div>
          <div className="flex-1 relative bg-[#c8c8c8]">
            <Pattern2D />
            <div className="absolute left-[11px] top-[11px] flex flex-col gap-1">
              <ViewIcon light><path d="M4 4 L20 18" stroke="#8f8f8f" strokeWidth="3" /><Eye /></ViewIcon>
              <ViewIcon light><path d={SHIRT} fill="#f2f2f2" /><Eye /></ViewIcon>
              <div className="w-[25px] h-[25px] bg-[#d4d4d4] flex items-center justify-center relative">
                <div className="w-[19px] h-[19px] rounded-full bg-[#3a3a3a] flex items-center justify-center text-[13px] font-bold italic leading-none text-[#e0a326]">i</div>
              </div>
              <ViewIcon light><path d="M5 6 L13 8 L21 3 V18 L17 21 H7 L4 17z" fill="#e4e4e4" stroke="#aaa" /></ViewIcon>
              <ViewIcon light><path d={SHIRT} fill="#bdbdbd" /><rect x="2" y="15" width="7" height="7" fill="#999" /></ViewIcon>
            </div>
          </div>
        </div>

        <div className="w-[7px] shrink-0 flex flex-col">
          <div className="h-[86px] bg-[#1c1c1e] border-r border-[#333]" />
          <div className="flex-1 bg-[#1a1a1a]" />
        </div>

        {/* Right panels */}
        <div className="flex-1 flex flex-col min-w-0">
          <div className="h-[21px] shrink-0 relative bg-[#1c1c1e] flex items-center justify-center pl-[12px] text-[11.6px] text-[#8c8c8c]">
            <PanelArrow />
            Object Browser
          </div>
          <div className="h-[24px] shrink-0 bg-[#1b1b1b] flex items-stretch text-[12px] text-[#4f4f4f] relative overflow-hidden">
            <div className="w-[56px] flex items-center justify-center">Scene</div>
            <div className="w-[55px] flex items-center justify-center bg-[#2c2c2c] text-[#c4c4c4] border-x border-[#3a3a3a]">Fabric</div>
            <div className="w-[56px] flex items-center justify-center border-r border-[#2a2a2a]">Button</div>
            <div className="w-[86px] flex items-center justify-center border-r border-[#2a2a2a]">Button Hole</div>
            <span className="absolute right-[3px] top-[7px] text-[9px] leading-none text-[#999]">◀</span>
          </div>
          <div className="h-[396px] shrink-0 bg-[#232323] relative">
            <div className="flex justify-start gap-[3px] pl-[95px] pt-[18px] text-[12px]">
              <div className="w-[59px] h-[20px] bg-[#2d2d2d] flex items-center justify-center gap-[5px] text-[#8e8e8e] shrink-0"><span className="text-[14px] leading-none">+</span>Add</div>
              <div className="w-[64px] h-[20px] bg-[#2a2a2a] flex items-center justify-center gap-[5px] text-[#454545] shrink-0"><span className="w-[8px] h-[10px] bg-[#3a3a3a]" />Copy</div>
              <div className="w-[64px] h-[20px] bg-[#2a2a2a] flex items-center pl-[6px] gap-[5px] text-[#454545] shrink-0"><span className="w-[8px] h-[8px] bg-[#3a3a3a]" />Assign</div>
            </div>
            <div className="ml-[10px] mt-[8px] border-t border-[#161616]">
              <div className="h-[44px] flex items-center border-b border-[#161616]">
                <svg width="14" height="12" viewBox="0 0 14 12" className="ml-[17px]">
                  <path d="M1 6 L5 10 L13 2" stroke="#f2b632" strokeWidth="2.5" fill="none" />
                </svg>
                <div className="ml-[11px] w-[37px] h-[37px] bg-white" />
                <span className="ml-[10px] text-[12px] text-[#444]">FABRIC 1</span>
              </div>
            </div>
          </div>
          <div className="h-[26px] shrink-0 bg-[#1c1c1e] border-y border-[#333] flex items-center justify-center pl-[12px] text-[11.5px] text-[#9a9a9a] relative">
            <PanelArrow />
            Property Editor
          </div>
          <div className="flex-1 bg-[#222]" />
        </div>
      </div>

      {/* Information dialog */}
      <div className="absolute left-[754px] top-[440px] w-[410px] h-[199px] bg-[#252525] border border-[#111] flex flex-col shadow-[0_0_2px_#000]">
        <div className="h-[25px] shrink-0 bg-[#1d1d1d] flex items-center justify-center text-[11.6px] text-[#c4c4c4] relative">
          Information
          <span className="absolute right-[4px] top-[6px] w-[10px] h-[10px] bg-[#333] flex items-center justify-center text-[10px] leading-none text-[#aaa]">×</span>
        </div>
        <div className="mx-[4px] mt-[5px] h-[119px] shrink-0 border border-[#111] bg-[#262626] pt-[19px] pl-[21px]">
          <div className="w-[358px] h-[78px] bg-[#1a1a1a] border border-[#101010] pl-[4px] pt-[4px] text-[11.7px] leading-[14.5px] text-[#8e8e8e]">
            Arrangement Points were not fitted to the avatar.<br />
            The avatar must be in a T-pose or A-pose.
          </div>
        </div>
        <div className="flex-1 flex items-center justify-center">
          <div className="w-[64px] h-[26px] bg-[linear-gradient(180deg,#2e2e2e,#1b1b1b)] border border-[#0c0c0c] flex items-center justify-center gap-[6px] text-[12px] text-[#8c8c8c]">
            <svg width="14" height="12" viewBox="0 0 14 12">
              <path d="M1 6 L5 10 L13 2" stroke="#f2c21e" strokeWidth="2.6" fill="none" />
            </svg>
            OK
          </div>
        </div>
      </div>
    </div>
  );
}
